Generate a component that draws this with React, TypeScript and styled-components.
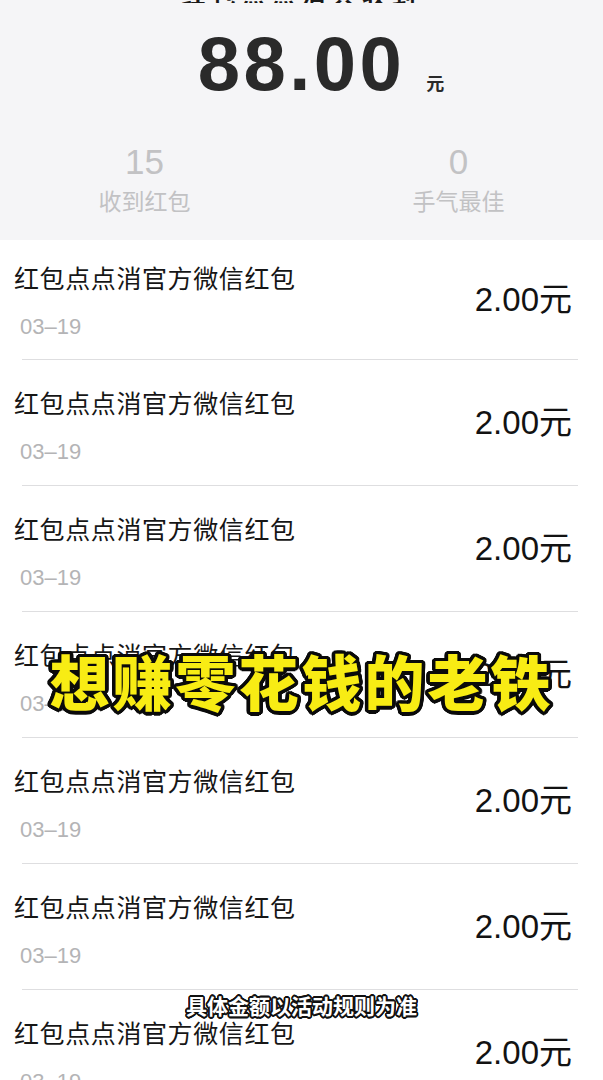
import styled, { createGlobalStyle } from "styled-components";

const GlobalStyle = createGlobalStyle`
  html, body {
    margin: 0;
    padding: 0;
    background: #ffffff;
  }
  body {
    font-family: "Liberation Sans", "Noto Sans CJK SC", sans-serif;
    -webkit-font-smoothing: antialiased;
  }
`;

// outline made of shadows, so it does not depend on paint-order support
const outline = (r: number, color: string): string => {
  const out: string[] = [];
  const steps = 24;
  for (let i = 0; i < steps; i++) {
    const a = (i / steps) * Math.PI * 2;
    out.push(`${(Math.cos(a) * r).toFixed(2)}px ${(Math.sin(a) * r).toFixed(2)}px 0 ${color}`);
  }
  return out.join(", ");
};

const Page = styled.div`
  position: relative;
  width: 603px;
  height: 1080px;
  overflow: hidden;
  background: #ffffff;
`;

const Header = styled.div`
  background: #f5f5f7;
  padding-bottom: 26px;
`;

const TitleClip = styled.div`
  height: 3px;
  overflow: hidden;
  display: flex;
  justify-content: center;
  align-items: flex-end;
`;

const ClippedTitle = styled.div`
  font-family: "Noto Sans CJK SC", sans-serif;
  font-size: 24px;
  line-height: 28px;
  font-weight: 700;
  color: #1a1a1a;
  margin-bottom: -5px;
  padding: 0 4px;
  letter-spacing: 6px;
  border-top: 1px solid #e4e4e6;
`;

const AmountRow = styled.div`
  margin-top: 23px;
  display: flex;
  justify-content: center;
  align-items: baseline;
`;

const AmountValue = styled.span`
  font-family: "Liberation Sans", sans-serif;
  font-size: 76px;
  line-height: 76px;
  font-weight: 700;
  letter-spacing: 3.5px;
  color: #2a2a2a;
`;

const AmountUnit = styled.span`
  font-family: "Noto Sans CJK SC", sans-serif;
  font-size: 18px;
  font-weight: 700;
  color: #2a2a2a;
  margin-left: 21px;
  margin-right: -39px;
`;

const Stats = styled.div`
  margin-top: 40px;
  display: flex;
  justify-content: center;
  gap: 194px;
`;

const Stat = styled.div`
  width: 120px;
  display: flex;
  flex-direction: column;
  align-items: center;
  color: #c2c2c4;
`;

const StatNumber = styled.div`
  font-family: "Liberation Sans", sans-serif;
  font-size: 35px;
  line-height: 40px;
`;

const StatLabel = styled.div`
  margin-top: 4px;
  font-family: "Noto Sans CJK SC", sans-serif;
  font-size: 23px;
  line-height: 28px;
`;

const List = styled.div`
  background: #ffffff;
`;

const Row = styled.div<{ $first?: boolean }>`
  height: ${(p) => (p.$first ? 119 : 125)}px;
  padding: 0 31px 0 14px;
  display: flex;
  justify-content: space-between;
  align-items: center;
`;

const Info = styled.div<{ $first?: boolean }>`
  align-self: flex-start;
  padding-top: ${(p) => (p.$first ? 22 : 27)}px;
  display: flex;
  flex-direction: column;
`;

const RowTitle = styled.div`
  font-family: "Noto Sans CJK SC", sans-serif;
  font-size: 25px;
  line-height: 30px;
  letter-spacing: 0.6px;
  color: #161616;
`;

const RowDate = styled.div`
  margin-top: 22px;
  margin-left: 6px;
  font-family: "Liberation Sans", sans-serif;
  font-size: 22px;
  line-height: 26px;
  color: #b4b4b6;
`;

const RowAmount = styled.div`
  font-family: "Liberation Sans", "Noto Sans CJK SC", sans-serif;
  font-size: 33px;
  line-height: 38px;
  color: #121212;
`;

const Divider = styled.div`
  height: 1px;
  margin: 0 25px 0 22px;
  background: #dedee0;
`;

const Caption = styled.div`
  position: absolute;
  left: 0;
  right: 0;
  top: 650px;
  text-align: center;
  font-family: "Noto Sans CJK SC", sans-serif;
  font-size: 60px;
  line-height: 60px;
  font-weight: 900;
  letter-spacing: 3px;
  color: #f8ec14;
  text-shadow: ${outline(3.5, "#0b0b0b")};
`;

const Subtitle = styled.div`
  position: absolute;
  left: 0;
  right: 0;
  top: 993px;
  text-align: center;
  font-family: "Noto Sans CJK SC", sans-serif;
  font-size: 21px;
  line-height: 24px;
  font-weight: 700;
  color: #ffffff;
  text-shadow: ${outline(1.6, "#111111")};
`;

type Packet = { title: string; date: string; amount: string };

const packets: Packet[] = Array.from({ length: 7 }, () => ({
  title: "红包点点消官方微信红包",
  date: "03–19",
  amount: "2.00元",
}));

export default function App() {
  return (
    <>
      <GlobalStyle />
      <Page>
        <Header>
          <TitleClip>
            <ClippedTitle>红包点点消共收到</ClippedTitle>
          </TitleClip>
          <AmountRow>
            <AmountValue>88.00</AmountValue>
            <AmountUnit>元</AmountUnit>
          </AmountRow>
          <Stats>
            <Stat>
              <StatNumber>15</StatNumber>
              <StatLabel>收到红包</StatLabel>
            </Stat>
            <Stat>
              <StatNumber>0</StatNumber>
              <StatLabel>手气最佳</StatLabel>
            </Stat>
          </Stats>
        </Header>
        <List>
          {packets.map((p, i) => (
            <div key={i}>
              <Row $first={i === 0}>
                <Info $first={i === 0}>
                  <RowTitle>{p.title}</RowTitle>
                  <RowDate>{p.date}</RowDate>
                </Info>
                <RowAmount>{p.amount}</RowAmount>
              </Row>
              <Divider />
            </div>
          ))}
        </List>
        <Caption>想赚零花钱的老铁</Caption>
        <Subtitle>具体金额以活动规则为准</Subtitle>
      </Page>
    </>
  );
}
